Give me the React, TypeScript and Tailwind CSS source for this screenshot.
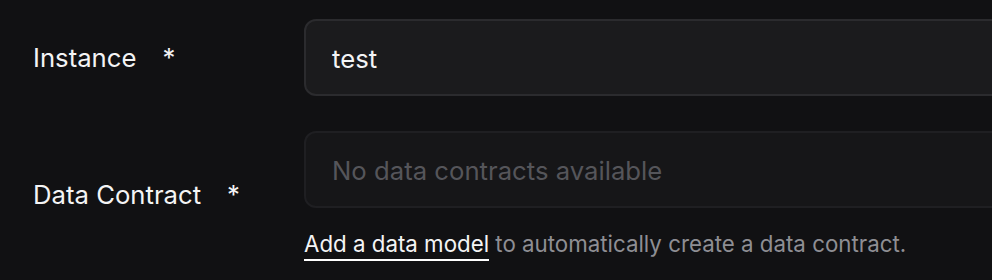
export default function App() {
  return (
    <div
      className="min-h-[280px] w-full bg-[#111113] text-white overflow-hidden"
      style={{ fontFamily: "Inter, 'Noto Sans', sans-serif" }}
    >
      <div className="flex flex-col gap-[35px] pt-[19px] pl-[33px]">
        <div className="flex items-center">
          <div className="w-[271px] flex items-center pt-[2px] text-[25.7px] text-[#f4f4f5]">
            <span>Instance</span>
            <span className="ml-[26px]">*</span>
          </div>
          <div className="flex-1 h-[77px] -mr-[20px] flex items-center rounded-[12px] border-2 border-[#2b2b2e] bg-[#1b1b1d] pl-[26px] pt-[3px] text-[25.7px] text-[#f4f4f5]">
            test
          </div>
        </div>
        <div className="flex items-center">
          <div className="w-[271px] flex items-center text-[25.7px] text-[#f4f4f5]">
            <span>Data Contract</span>
            <span className="ml-[26px]">*</span>
          </div>
          <div className="flex-1 -mr-[20px] flex flex-col">
            <div className="h-[77px] flex items-center rounded-[12px] border-2 border-[#1f1f22] bg-[#161618] pl-[26px] pt-[3px] text-[25.7px] text-[#55555a]">
              No data contracts available
            </div>
            <p className="mt-[19px] text-[22.3px] text-[#8e8e93]">
              <a className="text-[#f4f4f5] border-b-2 border-white pb-[2px]">
                Add a data model
              </a>{" "}
              to automatically create a data contract.
            </p>
          </div>
        </div>
      </div>
    </div>
  );
}
